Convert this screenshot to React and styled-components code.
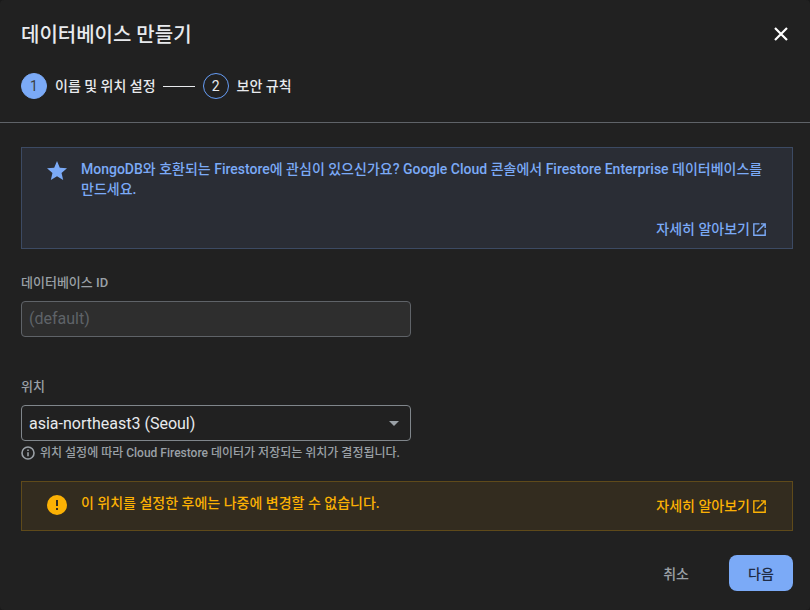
import styled, { createGlobalStyle } from 'styled-components'

const Global = createGlobalStyle`
  html, body { margin: 0; padding: 0; background: #1a1a1a; }
  * { box-sizing: border-box; }
  body { font-family: Roboto, "Noto Sans CJK KR", sans-serif; }
`

const Dialog = styled.div`
  width: 810px;
  height: 610px;
  background: #212121;
  border-radius: 4px;
  overflow: hidden;
  position: relative;
`

const Header = styled.div`
  height: 123px;
  padding: 21px 21px 0;
  border-bottom: 1px solid #5f6368;
`

const Title = styled.h2`
  margin: 0;
  height: 28px;
  font-size: 20px;
  line-height: 28px;
  font-weight: 500;
  color: #e8eaed;
`

const CloseButton = styled.div`
  position: absolute;
  top: 25px;
  right: 20px;
  width: 18px;
  height: 18px;
  color: #fff;
`

const Stepper = styled.div`
  display: flex;
  align-items: center;
  margin-top: 24px;
`

const StepCircle = styled.div`
  width: 26px;
  height: 26px;
  border-radius: 50%;
  display: flex;
  align-items: center;
  justify-content: center;
  font-size: 14px;
  background: ${p => (p.$active ? '#7baaf7' : 'transparent')};
  border: 1px solid ${p => (p.$active ? '#7baaf7' : '#669df6')};
  color: ${p => (p.$active ? '#3c4043' : '#e8eaed')};
`

const StepLabel = styled.span`
  margin-left: 8px;
  padding-bottom: 3px;
  font-size: 14px;
  font-weight: 500;
  color: #e8eaed;
`

const StepLine = styled.div`
  width: 32px;
  height: 1px;
  background: #e8eaed;
  margin: 0 8px 0 7px;
`

const Body = styled.div`
  padding: 24px 17px 0 21px;
`

const Banner = styled.div`
  display: flex;
  flex-direction: column;
  border: 1px solid #3c4a63;
  background: #2a2d35;
  color: #7baaf7;
  height: 102px;
  padding: 11px 0 9px;
  font-size: 14px;
  font-weight: 500;
`

const WarnBanner = styled(Banner)`
  flex-direction: row;
  border-color: #5f4a1a;
  background: #332c1f;
  color: #fbb104;
  height: 50px;
  margin-top: 20px;
  padding: 11px 0;
`

const BannerRow = styled.div`
  flex: ${p => (p.$grow ? 1 : 'none')};
  display: flex;
  align-items: flex-start;
`

const BannerIcon = styled.div`
  flex: none;
  width: 24px;
  height: 24px;
  margin: 0 12px 0 23px;
  color: inherit;
`

const BannerText = styled.div`
  flex: 1;
  line-height: 20px;
  padding-right: 20px;
`

const LearnMore = styled.div`
  display: flex;
  align-items: center;
  justify-content: flex-end;
  gap: 1px;
  padding-right: 24px;
  line-height: 20px;
  flex: none;
  margin-top: ${p => (p.$bottom ? 'auto' : '0')};
`

const Field = styled.div`
  width: 390px;
  margin-top: ${p => p.$top}px;
`

const Label = styled.div`
  font-size: 13px;
  line-height: 16px;
  font-weight: 500;
  color: #9aa0a6;
  margin-bottom: 10px;
`

const Input = styled.div`
  height: 36px;
  border: 1px solid ${p => (p.$disabled ? '#5f6368' : '#80868b')};
  border-radius: 4px;
  background: ${p => (p.$disabled ? '#2e2e2e' : '#212121')};
  color: ${p => (p.$disabled ? '#5f6368' : '#e8eaed')};
  font-size: 16px;
  display: flex;
  align-items: center;
  justify-content: space-between;
  padding: 0 11px ${p => (p.$disabled ? '2px' : '0')} 7px;
`

const Caret = styled.div`
  width: 0;
  height: 0;
  border-left: 5px solid transparent;
  border-right: 5px solid transparent;
  border-top: 5px solid #9aa0a6;
`

const Hint = styled.div`
  display: flex;
  align-items: center;
  gap: 4px;
  margin: 4px 0 0 -1px;
  font-size: 12px;
  line-height: 16px;
  font-weight: 500;
  color: #9aa0a6;
  white-space: nowrap;
`

const Footer = styled.div`
  display: flex;
  justify-content: flex-end;
  align-items: center;
  padding: 24px 17px 0 0;
`

const TextButton = styled.div`
  font-size: 14px;
  font-weight: 500;
  color: #9aa0a6;
  margin-right: 40px;
`

const PrimaryButton = styled.div`
  width: 64px;
  height: 36px;
  border-radius: 8px;
  background: #7baaf7;
  color: #202c45;
  font-size: 14px;
  font-weight: 500;
  display: flex;
  align-items: center;
  justify-content: center;
`

const ExternalIcon = () => (
  <svg width="17" height="17" viewBox="0 0 24 24" fill="currentColor">
    <path d="M19 19H5V5h7V3H3v18h18v-9h-2v7zM14 3v2h3.59l-9.83 9.83 1.41 1.41L19 6.41V10h2V3h-7z" />
  </svg>
)

export default function App() {
  return (
    <Dialog>
      <Global />
      <Header>
        <Title>데이터베이스 만들기</Title>
        <Stepper>
          <StepCircle $active>1</StepCircle>
          <StepLabel>이름 및 위치 설정</StepLabel>
          <StepLine />
          <StepCircle>2</StepCircle>
          <StepLabel>보안 규칙</StepLabel>
        </Stepper>
      </Header>
      <CloseButton>
        <svg width="18" height="18" viewBox="0 0 18 18" stroke="currentColor" strokeWidth="2.2" fill="none">
          <path d="M3 3l12 12M15 3L3 15" />
        </svg>
      </CloseButton>
      <Body>
        <Banner>
          <BannerRow>
            <BannerIcon>
              <svg width="24" height="24" viewBox="0 0 24 24" fill="currentColor">
                <path d="M12 17.27L18.18 21l-1.64-7.03L22 9.24l-7.19-.61L12 2 9.19 8.63 2 9.24l5.46 4.73L5.82 21z" />
              </svg>
            </BannerIcon>
            <BannerText>
              MongoDB와 호환되는 Firestore에 관심이 있으신가요? Google Cloud 콘솔에서 Firestore Enterprise 데이터베이스를 만드세요.
            </BannerText>
          </BannerRow>
          <LearnMore $bottom>
            자세히 알아보기<ExternalIcon />
          </LearnMore>
        </Banner>

        <Field $top={26}>
          <Label>데이터베이스 ID</Label>
          <Input $disabled>(default)</Input>
        </Field>

        <Field $top={42}>
          <Label>위치</Label>
          <Input>
            asia-northeast3 (Seoul)
            <Caret />
          </Input>
          <Hint>
            <svg width="16" height="16" viewBox="0 0 16 16" fill="none" stroke="currentColor">
              <circle cx="8" cy="8" r="6" strokeWidth="1.6" />
              <path d="M8 7.2v4M8 4.6v1.5" strokeWidth="1.6" />
            </svg>
            위치 설정에 따라 Cloud Firestore 데이터가 저장되는 위치가 결정됩니다.
          </Hint>
        </Field>

        <WarnBanner>
          <BannerRow $grow>
            <BannerIcon>
              <svg width="24" height="24" viewBox="0 0 24 24" fill="currentColor">
                <path d="M12 2a10 10 0 100 20 10 10 0 000-20zm1 15h-2v-2h2v2zm0-4h-2V7h2v6z" />
              </svg>
            </BannerIcon>
            <BannerText>이 위치를 설정한 후에는 나중에 변경할 수 없습니다.</BannerText>
          </BannerRow>
          <LearnMore>
            자세히 알아보기<ExternalIcon />
          </LearnMore>
        </WarnBanner>
      </Body>
      <Footer>
        <TextButton>취소</TextButton>
        <PrimaryButton>다음</PrimaryButton>
      </Footer>
    </Dialog>
  )
}
